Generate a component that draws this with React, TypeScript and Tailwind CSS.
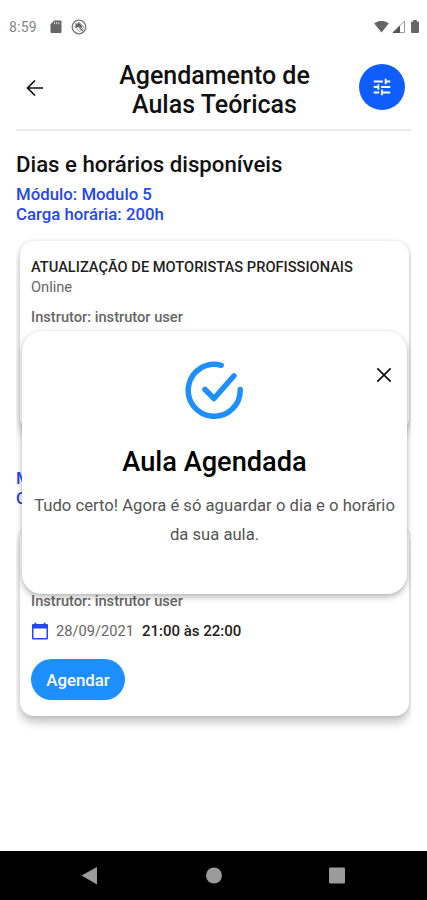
import React from 'react';
import { MdSignalWifi4Bar, MdTune } from 'react-icons/md';

const lessons = [
  {
    id: 1,
    module: 'Modulo 5',
    workload: '200h',
    course: 'ATUALIZAÇÃO DE MOTORISTAS PROFISSIONAIS',
    mode: 'Online',
    instructor: 'instrutor user',
    date: '28/09/2021',
    time: '21:00 às 22:00',
  },
  {
    id: 2,
    module: 'Modulo 5',
    workload: '200h',
    course: 'ATUALIZAÇÃO DE MOTORISTAS PROFISSIONAIS',
    mode: 'Online',
    instructor: 'instrutor user',
    date: '28/09/2021',
    time: '21:00 às 22:00',
  },
];

const StatusBar = () => (
  <div className="flex h-[53px] items-center pr-2 pl-[9px] text-[#666]">
    <span className="w-[41px] text-sm tracking-[0.2px] text-[#858585]">8:59</span>
    <svg width="12" height="14" viewBox="0 0 12 14" className="shrink-0">
      <path d="M4.200 .500H10.500a1 1 0 0 1 1 1v10.500a1 1 0 0 1-1 1h-9a1 1 0 0 1-1-1V4.200z" fill="#666" />
      <path d="M4.500 2v2.200M6.700 2v2.200M8.900 2v2.200" stroke="#ddd" strokeWidth="1" />
    </svg>
    <svg width="16" height="16" viewBox="0 0 16 16" fill="none" className="ml-[9px] shrink-0">
      <circle cx="8" cy="8" r="6.800" stroke="#777" strokeWidth="1.300" />
      <path d="M3.500 7.500 8 3l4.800 5L8.500 12.700z" stroke="#aaa" strokeWidth="1" />
      <path d="M5 8.300 8 5.200l2.800 3.100" stroke="#555" strokeWidth="2" />
      <path d="M4.500 4.500l7.500 7.500" stroke="#666" strokeWidth="1.200" />
    </svg>
    <div className="ml-auto flex items-center">
      <MdSignalWifi4Bar className="h-[15px] w-[15px]" />
      <svg width="14" height="14" viewBox="0 0 14 14" className="ml-[3px]">
        <path d="M1 12.500 12.500 1v11.500z" fill="none" stroke="#999" strokeWidth="1" />
        <path d="M.500 13 8 5.500V13z" fill="#555" />
      </svg>
      <svg width="8" height="14" viewBox="0 0 8 14" className="ml-[5px]" fill="#666">
        <path d="M2.300 0h3.400v1.500H7a1 1 0 0 1 1 1V12a1 1 0 0 1-1 1H1a1 1 0 0 1-1-1V2.500a1 1 0 0 1 1-1h1.300z" />
      </svg>
    </div>
  </div>
);

const Header = () => (
  <header className="mx-4 flex h-[78px] items-start justify-between border-b-2 border-[#ebebeb]">
    <button className="mt-[26px] ml-[10px] flex w-[44px]" aria-label="Voltar">
      <svg width="18" height="18" viewBox="0 0 18 18" fill="none" stroke="#111" strokeWidth="1.700">
        <path d="M17 9H2M9 1.500 1.500 9 9 16.500" />
      </svg>
    </button>
    <h1 className="mt-2 w-[220px] text-center text-[25px] leading-[29px] font-medium text-[#111]">
      Agendamento de
      <br />
      Aulas Teóricas
    </h1>
    <button
      className="mt-[11px] mr-[6px] flex h-[46px] w-[46px] items-center justify-center rounded-full bg-[#0f5cff]"
      aria-label="Filtros"
    >
      <MdTune className="h-[22px] w-[22px] text-white" />
    </button>
  </header>
);

const LessonCard = ({ lesson }: { lesson: (typeof lessons)[number] }) => (
  <section className="h-[284px]">
    <div className="text-[16.8px] leading-[19.5px] font-medium text-[#2347ee]">
      <p>Módulo: {lesson.module}</p>
      <p>Carga horária: {lesson.workload}</p>
    </div>
    <div className="mt-[17px] mr-[2px] ml-1 h-[191px] rounded-[14px] bg-white pt-4 pl-[11px] text-[14.650px] leading-5 shadow-[0_6px_10px_rgba(0,0,0,0.24),0_0_4px_rgba(0,0,0,0.1)]">
      <p className="font-medium text-[#222]">{lesson.course}</p>
      <p className="text-[#666]">{lesson.mode}</p>
      <p className="mt-[10px] font-medium text-[#666]">Instrutor: {lesson.instructor}</p>
      <div className="mt-[10px] flex items-center">
        <svg width="18" height="18" viewBox="0 0 18 18" fill="#2347ee">
          <path d="M2 2h14a1 1 0 0 1 1 1v13.500a1 1 0 0 1-1 1H2a1 1 0 0 1-1-1V3a1 1 0 0 1 1-1zm.500 4.500V16h13V6.500z" />
          <path d="M3.500 .700h1.800V3H3.500zM12.700 .700h1.800V3h-1.800z" />
        </svg>
        <span className="ml-[7px] text-[#666]">{lesson.date}</span>
        <span className="ml-2 text-[15px] font-medium text-[#222]">{lesson.time}</span>
      </div>
      <button className="mt-[18px] h-[41px] w-[94px] rounded-full bg-[#1e8fff] text-[16.8px] font-medium text-white">
        Agendar
      </button>
    </div>
  </section>
);

const ConfirmationModal = () => (
  <div className="absolute top-[331px] left-[22px] h-[263px] w-[385px] rounded-[20px] bg-white shadow-[0_3px_6px_rgba(0,0,0,0.28),0_0_2px_rgba(0,0,0,0.1)]">
    <button className="absolute top-[36px] right-[15px]" aria-label="Fechar">
      <svg width="16" height="16" viewBox="0 0 16 16" stroke="#111" strokeWidth="1.700">
        <path d="M1.300 1.300l13.400 13.400M14.700 1.300 1.300 14.700" />
      </svg>
    </button>
    <div className="flex flex-col items-center pt-[29px]">
      <svg
        width="60"
        height="60"
        viewBox="0 0 60 60"
        fill="none"
        stroke="#1e8fff"
        strokeWidth="5.500"
        strokeLinecap="round"
        strokeLinejoin="round"
        className="mr-[2px]"
      >
        <path d="M37.200 5.300A26 26 0 1 0 56.200 29.500" />
        <path d="M21 29.500 30 38.500 50 15.800" />
      </svg>
      <h2 className="mt-6 text-[27.200px] leading-9 font-medium text-black">Aula Agendada</h2>
      <p className="mt-[11px] text-center text-[16.650px] leading-[29px] whitespace-nowrap text-[#555]">
        Tudo certo! Agora é só aguardar o dia e o horário
        <br />
        da sua aula.
      </p>
    </div>
  </div>
);

const NavigationBar = () => (
  <nav className="flex h-[49px] items-center bg-black">
    <svg width="427" height="49" viewBox="0 0 427 49" fill="#9b9b9b">
      <path d="M81.500 24.500 97 16v17.500z" />
      <circle cx="214" cy="24.500" r="8" />
      <rect x="329" y="16.500" width="16" height="16" rx="1" />
    </svg>
  </nav>
);

const App = () => {
  return (
    <div className="relative flex h-[900px] w-[427px] flex-col overflow-hidden bg-white font-['Roboto',sans-serif]">
      <StatusBar />
      <Header />
      <main className="mx-4 flex-1 overflow-hidden">
        <h2 className="mt-[18px] mb-[6px] text-[22.200px] leading-[30px] font-medium text-[#111]">
          Dias e horários disponíveis
        </h2>
        {lessons.map((lesson) => (
          <LessonCard key={lesson.id} lesson={lesson} />
        ))}
      </main>
      <NavigationBar />
      <ConfirmationModal />
    </div>
  );
};

export default App;
